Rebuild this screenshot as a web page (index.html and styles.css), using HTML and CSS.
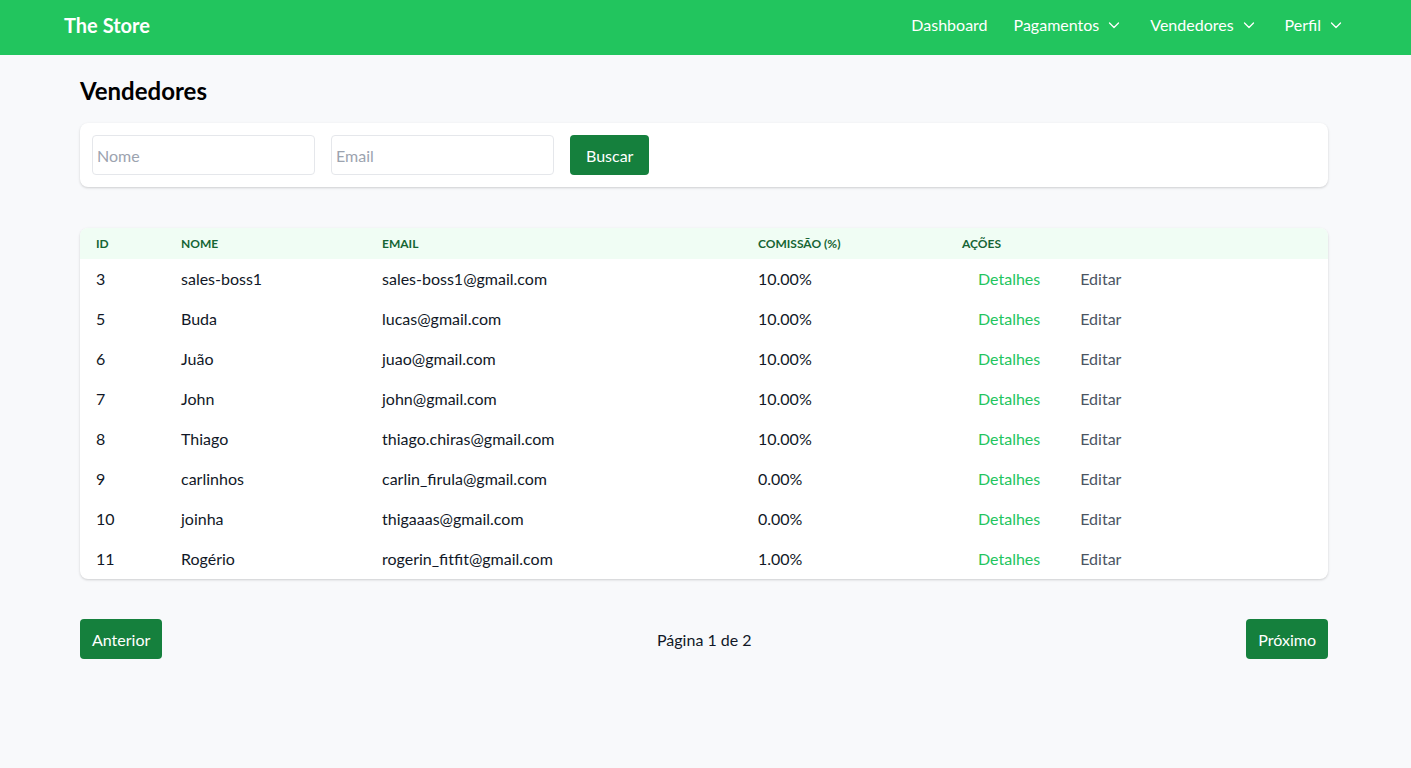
FILE: index.html
```html
<!DOCTYPE html>
<html lang="pt-BR">
<head>
<meta charset="utf-8">
<title>The Store - Vendedores</title>
<link rel="stylesheet" href="styles.css">
</head>
<body>
<header class="navbar">
  <a class="brand" href="#">The Store</a>
  <nav class="nav">
    <a class="nav-link" href="#">Dashboard</a>
    <a class="nav-link drop" href="#">Pagamentos <svg class="chev" viewBox="0 0 12 12" width="12" height="12"><path d="M1.5 4 6 8.5 10.5 4" fill="none" stroke="currentColor" stroke-width="1.3" stroke-linecap="round" stroke-linejoin="round"/></svg></a>
    <a class="nav-link drop" href="#">Vendedores <svg class="chev" viewBox="0 0 12 12" width="12" height="12"><path d="M1.5 4 6 8.5 10.5 4" fill="none" stroke="currentColor" stroke-width="1.3" stroke-linecap="round" stroke-linejoin="round"/></svg></a>
    <a class="nav-link drop" href="#">Perfil <svg class="chev" viewBox="0 0 12 12" width="12" height="12"><path d="M1.5 4 6 8.5 10.5 4" fill="none" stroke="currentColor" stroke-width="1.3" stroke-linecap="round" stroke-linejoin="round"/></svg></a>
  </nav>
</header>

<main class="container">
  <h1 class="title">Vendedores</h1>

  <form class="card filters">
    <input class="input" type="text" placeholder="Nome">
    <input class="input" type="text" placeholder="Email">
    <button class="btn" type="button">Buscar</button>
  </form>

  <div class="card table-card">
    <table class="table">
      <thead>
        <tr>
          <th class="c-id">ID</th>
          <th class="c-name">Nome</th>
          <th class="c-email">Email</th>
          <th class="c-com">Comissão (%)</th>
          <th>Ações</th>
        </tr>
      </thead>
      <tbody>
        <tr><td>3</td><td>sales-boss1</td><td>sales-boss1@gmail.com</td><td>10.00%</td><td class="actions"><a class="link-green" href="#">Detalhes</a><a class="link-gray" href="#">Editar</a></td></tr>
        <tr><td>5</td><td>Buda</td><td>lucas@gmail.com</td><td>10.00%</td><td class="actions"><a class="link-green" href="#">Detalhes</a><a class="link-gray" href="#">Editar</a></td></tr>
        <tr><td>6</td><td>Juão</td><td>juao@gmail.com</td><td>10.00%</td><td class="actions"><a class="link-green" href="#">Detalhes</a><a class="link-gray" href="#">Editar</a></td></tr>
        <tr><td>7</td><td>John</td><td>john@gmail.com</td><td>10.00%</td><td class="actions"><a class="link-green" href="#">Detalhes</a><a class="link-gray" href="#">Editar</a></td></tr>
        <tr><td>8</td><td>Thiago</td><td>thiago.chiras@gmail.com</td><td>10.00%</td><td class="actions"><a class="link-green" href="#">Detalhes</a><a class="link-gray" href="#">Editar</a></td></tr>
        <tr><td>9</td><td>carlinhos</td><td>carlin_firula@gmail.com</td><td>0.00%</td><td class="actions"><a class="link-green" href="#">Detalhes</a><a class="link-gray" href="#">Editar</a></td></tr>
        <tr><td>10</td><td>joinha</td><td>thigaaas@gmail.com</td><td>0.00%</td><td class="actions"><a class="link-green" href="#">Detalhes</a><a class="link-gray" href="#">Editar</a></td></tr>
        <tr><td>11</td><td>Rogério</td><td>rogerin_fitfit@gmail.com</td><td>1.00%</td><td class="actions"><a class="link-green" href="#">Detalhes</a><a class="link-gray" href="#">Editar</a></td></tr>
      </tbody>
    </table>
  </div>

  <div class="pagination">
    <button class="btn" type="button">Anterior</button>
    <span class="page-info">Página 1 de 2</span>
    <button class="btn" type="button">Próximo</button>
  </div>
</main>
</body>
</html>
```

FILE: styles.css
```css
* { box-sizing: border-box; }

body {
  margin: 0;
  background: #f8f9fb;
  font-family: Lato, "Noto Sans", sans-serif;
  font-size: 16px;
  color: #111827;
}

a { text-decoration: none; }

.navbar {
  height: 55px;
  background: #22c55e;
  display: flex;
  align-items: flex-start;
  justify-content: space-between;
  padding: 13px 65px 0 64px;
  line-height: 24px;
}

.brand {
  color: #fff;
  font-weight: 700;
  font-size: 20px;
}

.nav {
  display: flex;
  align-items: center;
  gap: 26px;
}

.nav-link {
  color: #fff;
  display: flex;
  align-items: center;
  gap: 9px;
}

.nav-link.drop { padding-right: 4px; }

.chev { display: block; }

.container {
  padding: 0 83px 60px 80px;
}

.title {
  margin: 0;
  padding: 20px 0 16px;
  font-size: 24px;
  line-height: 32px;
  font-weight: 700;
  color: #000;
}

.card {
  background: #fff;
  border-radius: 8px;
  box-shadow: 0 1px 3px rgba(0,0,0,0.12), 0 1px 2px rgba(0,0,0,0.06);
}

.filters {
  display: flex;
  gap: 16px;
  padding: 12px;
  margin: 0 0 41px;
}

.input {
  width: 223px;
  height: 40px;
  border: 1px solid #e5e7eb;
  border-radius: 4px;
  padding: 0 4px;
  font: inherit;
  color: #111827;
}

.input::placeholder { color: #9ca3af; }

.btn {
  height: 40px;
  padding: 0 12px;
  border: 0;
  border-radius: 4px;
  background: #15803d;
  color: #fff;
  font: inherit;
  cursor: pointer;
}

.filters .btn { padding: 0 16px; }

.table-card { overflow: hidden; }

.table {
  width: 100%;
  border-collapse: collapse;
}

.table th {
  background: #f0fdf4;
  color: #166534;
  font-size: 12px;
  font-weight: 700;
  text-transform: uppercase;
  text-align: left;
  height: 31px;
  padding: 0 16px;
}

.table td {
  height: 40px;
  padding: 0 16px 1px;
}

.c-id { width: 85px; }
.c-name { width: 201px; }
.c-email { width: 376px; }
.c-com { width: 204px; }

.actions a {
  padding: 0 16px;
  margin-right: 8px;
}

.link-green { color: #22c55e; }
.link-gray { color: #4b5563; }

.pagination {
  display: flex;
  justify-content: space-between;
  align-items: center;
  margin-top: 40px;
}
```
